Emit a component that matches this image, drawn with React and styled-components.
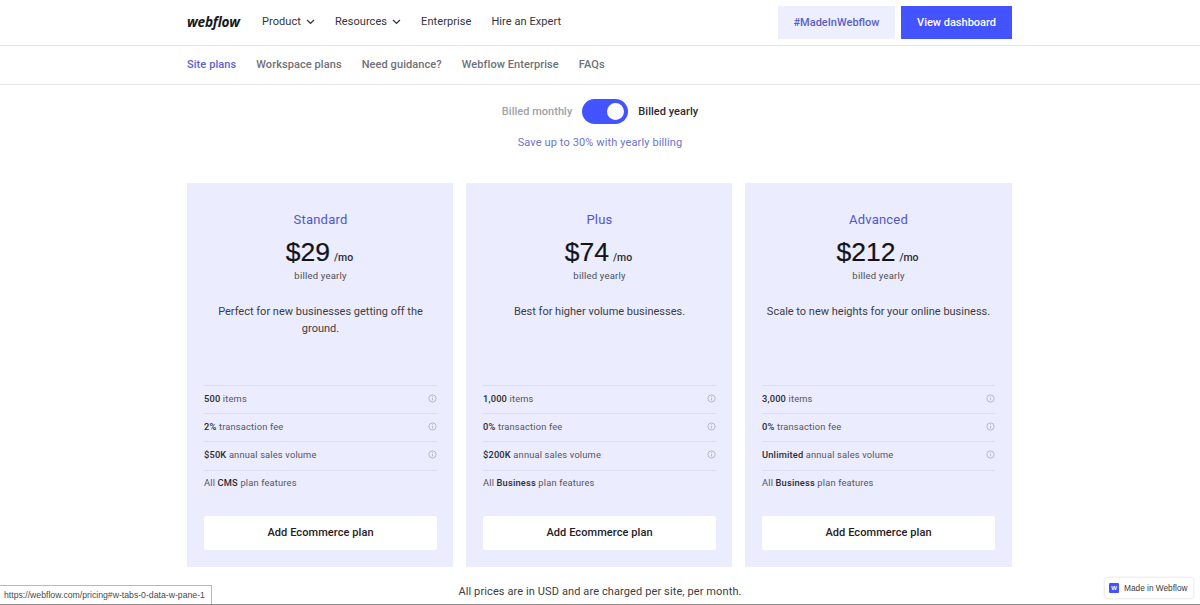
import React from "react";
import styled, { createGlobalStyle } from "styled-components";

const GlobalStyle = createGlobalStyle`
  html, body {
    margin: 0;
    padding: 0;
    height: 100%;
    background: #fff;
    overflow: hidden;
    font-family: "Roboto", "Open Sans", sans-serif;
    color: #1a1b1f;
  }
  * { box-sizing: border-box; }
`;

const plans = [
  {
    name: "Standard",
    price: "$29",
    desc: "Perfect for new businesses getting off the ground.",
    rows: [
      { bold: "500", rest: " items" },
      { bold: "2%", rest: " transaction fee" },
      { bold: "$50K", rest: " annual sales volume" },
    ],
    tier: "CMS",
  },
  {
    name: "Plus",
    price: "$74",
    desc: "Best for higher volume businesses.",
    rows: [
      { bold: "1,000", rest: " items" },
      { bold: "0%", rest: " transaction fee" },
      { bold: "$200K", rest: " annual sales volume" },
    ],
    tier: "Business",
  },
  {
    name: "Advanced",
    price: "$212",
    desc: "Scale to new heights for your online business.",
    rows: [
      { bold: "3,000", rest: " items" },
      { bold: "0%", rest: " transaction fee" },
      { bold: "Unlimited", rest: " annual sales volume" },
    ],
    tier: "Business",
  },
];

function Chevron() {
  return (
    <ChevronSvg viewBox="0 0 10 7" fill="none" stroke="#33343a" strokeWidth="1.5">
      <path d="M1 1.2 L5 5.2 L9 1.2" />
    </ChevronSvg>
  );
}

function InfoIcon() {
  return (
    <InfoSvg viewBox="0 0 10 10" fill="none" stroke="#a3a5b5" strokeWidth="0.8">
      <circle cx="5" cy="5" r="4" />
      <path d="M5 4.4 V7.2 M5 2.6 V3.5" />
    </InfoSvg>
  );
}

function PlanCard({ plan }) {
  return (
    <Card>
      <PlanName>{plan.name}</PlanName>
      <PriceRow>
        <Price>{plan.price}</Price>
        <Per>/mo</Per>
      </PriceRow>
      <Billed>billed yearly</Billed>
      <Desc>{plan.desc}</Desc>
      <Features>
        {plan.rows.map((row) => (
          <Feature key={row.rest}>
            <span>
              <b>{row.bold}</b>
              {row.rest}
            </span>
            <InfoIcon />
          </Feature>
        ))}
        <Feature>
          <span>
            All <b>{plan.tier}</b> plan features
          </span>
        </Feature>
      </Features>
      <AddButton>Add Ecommerce plan</AddButton>
    </Card>
  );
}

export default function App() {
  return (
    <Page>
      <GlobalStyle />
      <Header>
        <Bar>
          <NavLeft>
            <Logo>webflow</Logo>
            <NavItem>Product <Chevron /></NavItem>
            <NavItem>Resources <Chevron /></NavItem>
            <NavItem>Enterprise</NavItem>
            <NavItem>Hire an Expert</NavItem>
          </NavLeft>
          <NavRight>
            <HeaderButton>#MadeInWebflow</HeaderButton>
            <HeaderButton primary>View dashboard</HeaderButton>
          </NavRight>
        </Bar>
      </Header>
      <SubNav>
        <SubBar>
          <SubLink active>Site plans</SubLink>
          <SubLink>Workspace plans</SubLink>
          <SubLink>Need guidance?</SubLink>
          <SubLink>Webflow Enterprise</SubLink>
          <SubLink>FAQs</SubLink>
        </SubBar>
      </SubNav>
      <Billing>
        <BillLabel>Billed monthly</BillLabel>
        <Toggle><Knob /></Toggle>
        <BillLabel on>Billed yearly</BillLabel>
      </Billing>
      <Save>Save up to 30% with yearly billing</Save>
      <Cards>
        {plans.map((plan) => (
          <PlanCard key={plan.name} plan={plan} />
        ))}
      </Cards>
      <Footnote>All prices are in USD and are charged per site, per month.</Footnote>
      <StatusUrl>https://webflow.com/pricing#w-tabs-0-data-w-pane-1</StatusUrl>
      <Badge>
        <BadgeMark>W</BadgeMark>
        Made in Webflow
      </Badge>
    </Page>
  );
}

const Page = styled.div`
  position: relative;
  height: 605px;
  overflow: hidden;
  border-bottom: 1px solid #8f8f8f;
`;

const Header = styled.header`
  height: 46px;
  border-bottom: 1px solid #e6e6e9;
`;

const Bar = styled.div`
  width: 825px;
  margin-left: 187px;
  height: 45px;
  display: flex;
  justify-content: space-between;
  align-items: flex-start;
`;

const NavLeft = styled.div`
  display: flex;
  align-items: center;
  height: 42px;
`;

const Logo = styled.div`
  font-family: "Open Sans", sans-serif;
  font-style: italic;
  font-weight: 700;
  font-size: 13.6px;
  letter-spacing: -0.2px;
  color: #16171a;
  width: 75px;
`;

const NavItem = styled.div`
  display: flex;
  align-items: center;
  gap: 5px;
  font-size: 11px;
  font-weight: 400;
  letter-spacing: 0.07px;
  color: #33343a;
  margin-right: 20px;
`;

const ChevronSvg = styled.svg`
  width: 9px;
  height: 6px;
  margin-top: 1px;
`;

const NavRight = styled.div`
  display: flex;
  gap: 6px;
  padding-top: 6px;
`;

const HeaderButton = styled.div`
  height: 33px;
  display: flex;
  align-items: center;
  justify-content: center;
  width: ${(p) => (p.primary ? "111px" : "117px")};
  background: ${(p) => (p.primary ? "#4353ff" : "#eeeffe")};
  color: ${(p) => (p.primary ? "#fff" : "#5a60c8")};
  font-size: 11px;
  font-weight: 500;
`;

const SubNav = styled.nav`
  height: 39px;
  border-bottom: 1px solid #e6e6e9;
`;

const SubBar = styled.div`
  margin-left: 187px;
  height: 37px;
  display: flex;
  align-items: center;
  gap: 20px;
`;

const SubLink = styled.div`
  font-size: 11px;
  font-weight: 500;
  letter-spacing: 0.08px;
  color: ${(p) => (p.active ? "#5a64d2" : "#707178")};
`;

const Billing = styled.div`
  display: flex;
  justify-content: center;
  align-items: center;
  gap: 10px;
  margin-top: 14px;
  height: 25px;
`;

const BillLabel = styled.div`
  font-size: 11px;
  font-weight: 500;
  letter-spacing: 0.03px;
  color: ${(p) => (p.on ? "#2b2c31" : "#a0a1a6")};
`;

const Toggle = styled.div`
  width: 46px;
  height: 25px;
  border-radius: 13px;
  background: #4353ff;
  display: flex;
  align-items: center;
  justify-content: flex-end;
  padding-right: 4px;
`;

const Knob = styled.div`
  width: 17px;
  height: 17px;
  border-radius: 50%;
  background: #fff;
`;

const Save = styled.div`
  margin-top: 12px;
  text-align: center;
  font-size: 11px;
  letter-spacing: 0.12px;
  color: #6c74cf;
`;

const Cards = styled.div`
  margin: 34px 0 0 187px;
  width: 825px;
  display: grid;
  grid-template-columns: 266px 266px 267px;
  gap: 13px;
`;

const Card = styled.div`
  height: 384px;
  background: #ebecfe;
  padding: 29px 16px 17px 17px;
  display: flex;
  flex-direction: column;
  align-items: center;

  &:last-child {
    padding-right: 17px;
  }
`;

const PlanName = styled.div`
  font-size: 13px;
  font-weight: 400;
  letter-spacing: 0.2px;
  color: #4f58c9;
  line-height: 16px;
`;

const PriceRow = styled.div`
  display: flex;
  align-items: baseline;
  gap: 4px;
  margin-top: 7px;
  margin-right: 2px;
  height: 34px;
`;

const Price = styled.div`
  font-family: "Liberation Sans", sans-serif;
  font-size: 26.5px;
  line-height: 34px;
  color: #131418;
  -webkit-text-stroke: 0.2px #131418;
`;

const Per = styled.div`
  font-size: 10.5px;
  font-weight: 500;
  color: #2b2c31;
`;

const Billed = styled.div`
  margin-top: 0;
  font-size: 9.5px;
  letter-spacing: 0.2px;
  line-height: 14px;
  color: #4d4e55;
`;

const Desc = styled.div`
  margin-top: 20px;
  width: 100%;
  height: 82px;
  text-align: center;
  font-size: 11px;
  line-height: 17px;
  color: #3c3d44;
`;

const Features = styled.div`
  width: 100%;
  height: 115px;
`;

const Feature = styled.div`
  height: 28.2px;
  padding-bottom: 3px;
  border-top: 1px solid #dcddf0;
  display: flex;
  justify-content: space-between;
  align-items: center;
  font-size: 9.3px;
  letter-spacing: 0.17px;
  color: #54555e;

  b {
    font-weight: 500;
    color: #2b2c31;
  }
`;

const InfoSvg = styled.svg`
  width: 9px;
  height: 9px;
`;

const AddButton = styled.div`
  width: 100%;
  height: 34px;
  margin-top: 16px;
  padding-bottom: 1px;
  background: #fff;
  border-radius: 2px;
  display: flex;
  align-items: center;
  justify-content: center;
  font-size: 11px;
  font-weight: 500;
  letter-spacing: 0.08px;
  color: #1f2025;
`;

const Footnote = styled.div`
  margin-top: 18px;
  text-align: center;
  font-size: 11px;
  letter-spacing: 0.11px;
  color: #3c3d44;
`;

const StatusUrl = styled.div`
  position: absolute;
  left: 0;
  bottom: 0;
  width: 212px;
  height: 19px;
  padding-left: 4px;
  display: flex;
  align-items: center;
  background: #fff;
  border: 1px solid #b8b8b8;
  border-left: 0;
  border-bottom: 0;
  font-family: "Liberation Sans", sans-serif;
  font-size: 8.7px;
  color: #4a4a4a;
  white-space: nowrap;
`;

const Badge = styled.div`
  position: absolute;
  left: 1105px;
  top: 578px;
  width: 88px;
  height: 20px;
  padding-left: 4px;
  display: flex;
  align-items: center;
  gap: 5px;
  background: #fff;
  border-radius: 3px;
  box-shadow: 0 0 3px rgba(30, 30, 60, 0.2);
  font-family: "Liberation Sans", sans-serif;
  font-size: 8.3px;
  color: #3a3a40;
  white-space: nowrap;
`;

const BadgeMark = styled.div`
  width: 10px;
  height: 10px;
  background: #4353ff;
  border-radius: 1px;
  color: #fff;
  font-size: 6px;
  font-weight: 700;
  display: flex;
  align-items: center;
  justify-content: center;
`;
